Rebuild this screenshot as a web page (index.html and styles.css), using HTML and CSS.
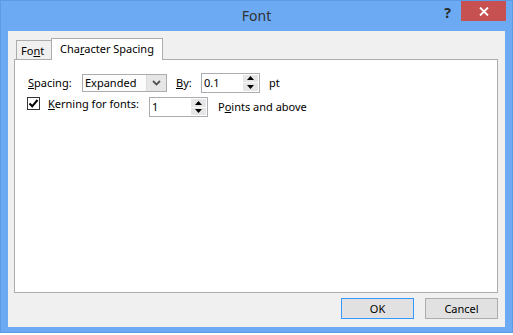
FILE: index.html
```html
<!DOCTYPE html>
<html>
<head>
<meta charset="utf-8">
<link rel="stylesheet" href="styles.css">
</head>
<body>
<div class="window">
  <div class="titlebar">
    <div class="tb-spacer"></div>
    <div class="title">Font</div>
    <div class="tb-controls">
      <div class="help">?</div>
      <div class="close"><svg width="10" height="9" viewBox="0 0 10 9"><path d="M1 0.5 L9 8.5 M9 0.5 L1 8.5" stroke="#fff" stroke-width="1.8" fill="none"/></svg></div>
    </div>
  </div>
  <div class="client">
    <div class="tabs">
      <div class="tab tab-font">Fo<u>n</u>t</div>
      <div class="tab tab-active">Cha<u>r</u>acter Spacing</div>
    </div>
    <div class="panel">
      <div class="row row-spacing">
        <div class="lbl lbl-spacing"><u>S</u>pacing:</div>
        <div class="combo">
          <div class="combo-text">Expanded</div>
          <div class="combo-btn"><svg width="9" height="6" viewBox="0 0 9 6"><path d="M1 1 L4.5 4.5 L8 1" stroke="#555" stroke-width="1.8" fill="none"/></svg></div>
        </div>
        <div class="lbl lbl-by"><u>B</u>y:</div>
        <div class="spin">
          <div class="spin-text">0.1</div>
          <div class="spin-btns">
            <div class="spin-up"><svg width="7" height="4" viewBox="0 0 7 4"><path d="M0 4 L3.5 0 L7 4 Z" fill="#000"/></svg></div>
            <div class="spin-down"><svg width="7" height="4" viewBox="0 0 7 4"><path d="M0 0 L3.5 4 L7 0 Z" fill="#000"/></svg></div>
          </div>
        </div>
        <div class="lbl lbl-pt">pt</div>
      </div>
      <div class="row row-kerning">
        <div class="checkbox"><svg width="11" height="11" viewBox="0 0 11 11"><path d="M1.5 5.5 L4.2 8.3 L9.5 2" stroke="#000" stroke-width="2" fill="none"/></svg></div>
        <div class="lbl lbl-kerning"><u>K</u>erning for fonts:</div>
        <div class="spin spin-k">
          <div class="spin-text">1</div>
          <div class="spin-btns">
            <div class="spin-up"><svg width="7" height="4" viewBox="0 0 7 4"><path d="M0 4 L3.5 0 L7 4 Z" fill="#000"/></svg></div>
            <div class="spin-down"><svg width="7" height="4" viewBox="0 0 7 4"><path d="M0 0 L3.5 4 L7 0 Z" fill="#000"/></svg></div>
          </div>
        </div>
        <div class="lbl lbl-points">P<u>o</u>ints and above</div>
      </div>
    </div>
    <div class="buttons">
      <div class="btn btn-default">OK</div>
      <div class="btn">Cancel</div>
    </div>
  </div>
</div>
</body>
</html>
```
FILE: styles.css
```css
html, body {
  margin: 0;
  padding: 0;
  background: #ffffff;
}
body {
  font-family: "Noto Sans", "Open Sans", sans-serif;
  font-size: 11px;
  color: #000;
}
.window {
  width: 513px;
  box-sizing: border-box;
  border: 1px solid #5c9ce6;
  background: #6caaf3;
  display: flex;
  flex-direction: column;
}
.titlebar {
  height: 30px;
  display: grid;
  grid-template-columns: 80px 1fr 80px;
}
.title {
  text-align: center;
  font-size: 14px;
  line-height: 30px;
  color: #333;
}
.tb-controls {
  display: flex;
  justify-content: flex-end;
  align-items: flex-start;
  padding-right: 6px;
}
.help {
  font-weight: bold;
  font-size: 14px;
  line-height: 14px;
  color: #2a2a2a;
  margin-top: 5px;
  margin-right: 10px;
}
.close {
  width: 45px;
  height: 20px;
  background: #c75050;
  display: flex;
  align-items: center;
  justify-content: center;
}
.client {
  margin: 0 7px 5px 7px;
  background: #f0f0f0;
  padding: 7px 7px 8px 6px;
  display: flex;
  flex-direction: column;
}
.tabs {
  display: flex;
  align-items: flex-end;
  height: 21px;
  padding-left: 2px;
}
.tab {
  box-sizing: border-box;
  border: 1px solid #acacac;
  border-bottom: none;
  white-space: nowrap;
}
.tab-font {
  width: 35px;
  height: 19px;
  border-right: none;
  background: #f0f0f0;
  padding: 3px 0 0 4px;
  line-height: 14px;
}
.tab-active {
  width: 112px;
  height: 22px;
  margin-bottom: -1px;
  background: #fff;
  position: relative;
  z-index: 1;
  padding-left: 8px;
  line-height: 20px;
}
.panel {
  box-sizing: border-box;
  height: 234px;
  border: 1px solid #acacac;
  background: #fff;
  padding: 12px 0 0 13px;
}
.row {
  display: flex;
  line-height: 14px;
}
.row-spacing {
  height: 21px;
  align-items: center;
}
.row-kerning {
  margin-top: 4px;
  align-items: flex-start;
}
.lbl {
  white-space: nowrap;
}
.lbl-spacing { width: 54px; }
.lbl-by { width: 25px; margin-left: 9px; }
.lbl-pt { margin-left: 9px; }
.combo {
  box-sizing: border-box;
  width: 85px;
  height: 18px;
  border: 1px solid #acacac;
  display: flex;
  background: #fcfcfc;
}
.combo-text {
  flex: 1;
  padding-left: 2px;
  line-height: 16px;
}
.combo-btn {
  width: 19px;
  background: #e6e6e6;
  border-left: 1px solid #dcdcdc;
  display: flex;
  align-items: center;
  justify-content: center;
}
.spin {
  box-sizing: border-box;
  width: 59px;
  height: 20px;
  border: 1px solid #abadb3;
  background: #fff;
  display: flex;
}
.spin-text {
  flex: 1;
  padding-left: 2px;
  line-height: 18px;
}
.spin-btns {
  width: 15px;
  margin: 1px 1px 1px 0;
  display: flex;
  flex-direction: column;
}
.spin-up, .spin-down {
  flex: 1;
  background: #e6e6e6;
  display: flex;
  align-items: center;
  justify-content: center;
}
.spin-down {
  border-top: 1px solid #f8f8f8;
}
.checkbox {
  box-sizing: border-box;
  width: 13px;
  height: 13px;
  border: 1px solid #333;
  background: #fff;
  margin-left: -1px;
  display: flex;
  align-items: center;
  justify-content: center;
}
.lbl-kerning {
  width: 101px;
  margin-left: 8px;
  line-height: 13px;
}
.lbl-points {
  margin-left: 10px;
  line-height: 20px;
}
.buttons {
  display: flex;
  justify-content: flex-end;
  gap: 11px;
  margin-top: 5px;
}
.btn {
  box-sizing: border-box;
  width: 73px;
  height: 21px;
  border: 1px solid #adadad;
  background: #e1e1e1;
  text-align: center;
  line-height: 19px;
}
.btn-default {
  border-color: #3399ff;
}
```
